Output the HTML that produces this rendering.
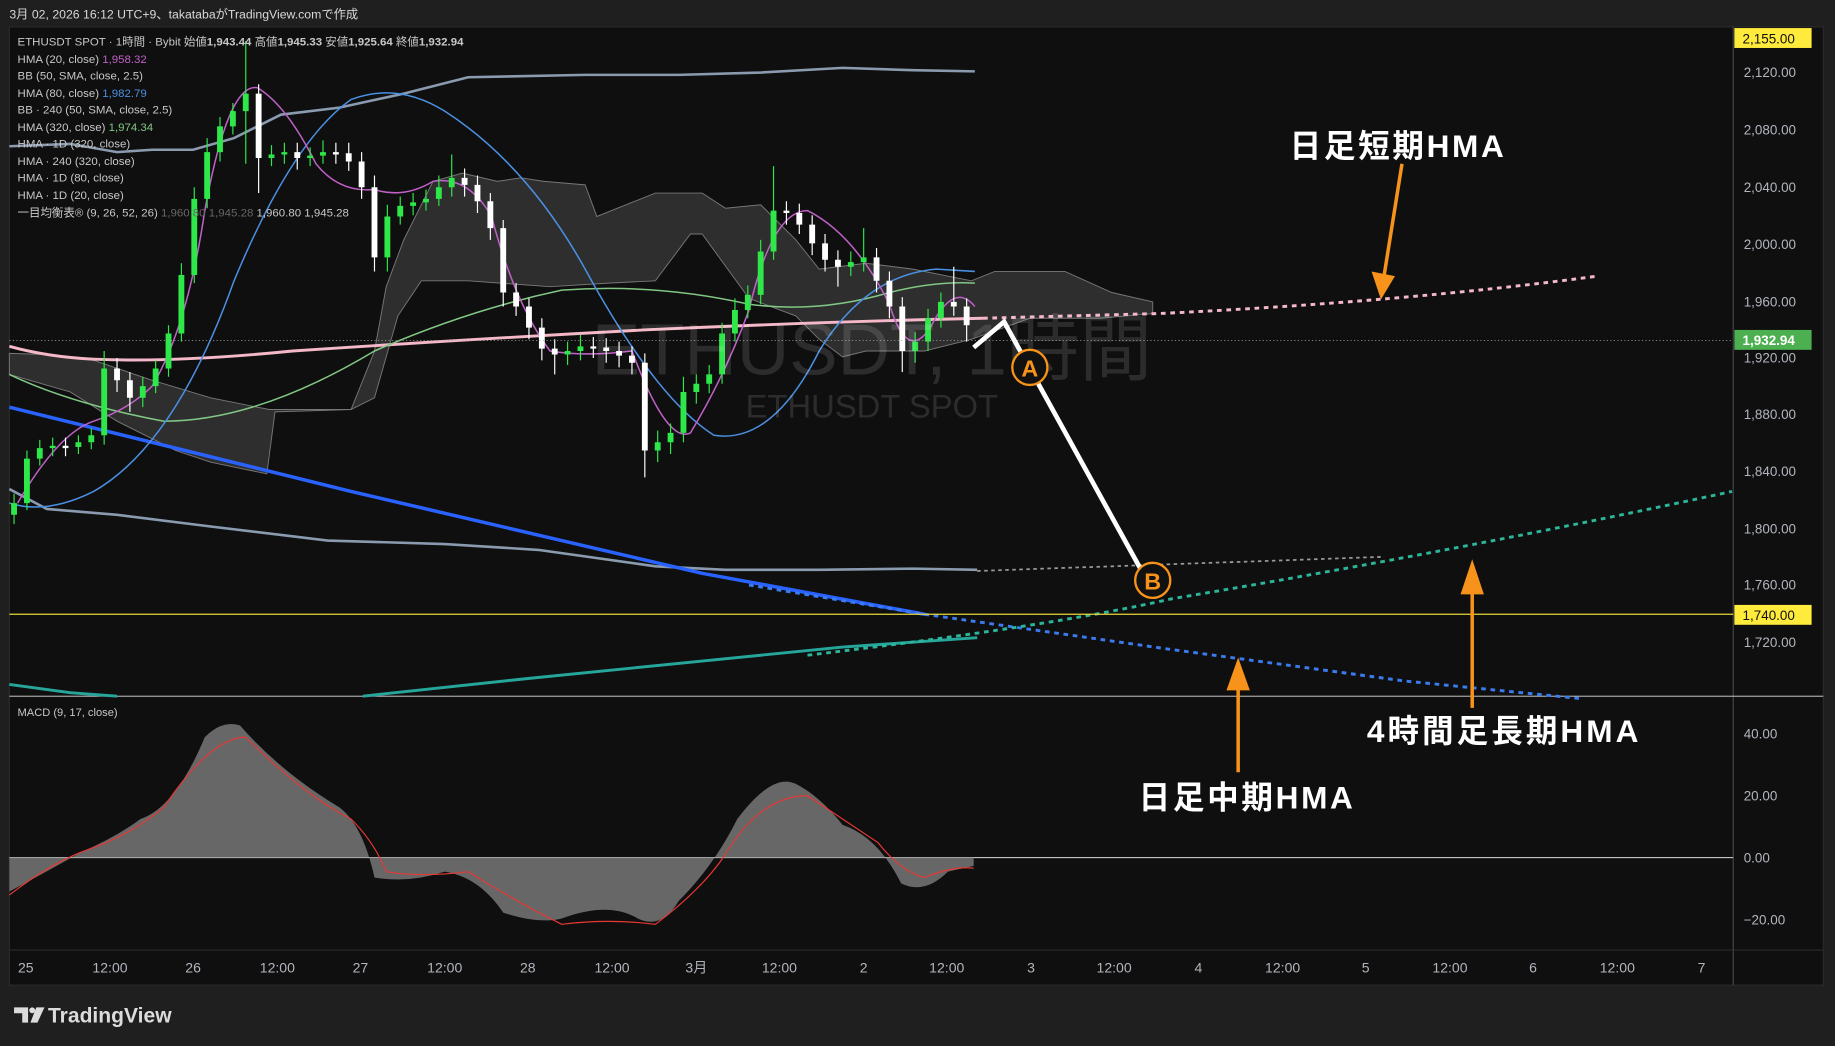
<!DOCTYPE html>
<html><head><meta charset="utf-8"><style>
html,body{margin:0;padding:0;background:#1f1f1f;width:1835px;height:1046px;overflow:hidden}
svg{display:block}
text{font-family:"Liberation Sans","Noto Sans CJK JP",sans-serif}
</style></head><body>
<svg width="1835" height="1046" viewBox="0 0 1568 894" preserveAspectRatio="none" xmlns="http://www.w3.org/2000/svg">
<rect width="1568" height="894" fill="#1f1f1f"/>
<text x="8" y="16" font-size="10.5" fill="#d8d8d8">3月 02, 2026 16:12 UTC+9、takatabaがTradingView.comで作成</text>
<rect x="8" y="23" width="1550" height="819" fill="#0f0f0f" stroke="#2a2a2a"/>
<line x1="1481" y1="23" x2="1481" y2="842" stroke="#555" stroke-width="0.8"/>
<line x1="8" y1="595" x2="1558" y2="595" stroke="#ddd" stroke-width="0.8"/>
<line x1="8" y1="812" x2="1558" y2="812" stroke="#333" stroke-width="0.8"/>
<path d="M8,302 L40,303 L80,308 L130,325 L180,340 L230,350 L300,350 L320,300 L330,245 L345,205 L370,155 L395,148 L425,155 L445,152 L465,155 L500,158 L510,185 L560,165 L600,165 L620,178 L650,175 L680,205 L700,230 L740,225 L780,230 L830,240 L850,232 L910,232 L950,250 L985,258 L985,268 L940,272 L880,272 L830,290 L790,300 L770,300 L740,300 L720,305 L700,290 L680,270 L640,255 L600,200 L590,200 L560,240 L520,242 L470,245 L400,240 L360,240 L340,270 L320,340 L300,350 L235,352 L228,405 L180,395 L150,385 L100,360 L60,335 L8,320 Z" fill="#3a3a3a" fill-opacity="0.75" stroke="#777" stroke-width="0.8"/>
<polyline points="8,125 60,123 100,130 130,128 165,128 200,118 240,98 290,92 345,80 400,66 500,64 580,64 650,62 720,58 780,60 833,61" fill="none" stroke="#8a9bb0" stroke-width="2.2"/>
<polyline points="8,418 40,435 100,440 180,450 280,462 380,465 460,470 560,484 620,487 700,487 780,486 835,487" fill="none" stroke="#8a9bb0" stroke-width="2.2"/>
<polyline points="835,488 1180,476" fill="none" stroke="#999" stroke-width="1.5" stroke-dasharray="3,3"/>
<polyline points="8,348 300,420 600,490 790,525" fill="none" stroke="#2962ff" stroke-width="3"/>
<polyline points="640,500 790,525 1000,555 1200,582 1350,597" fill="none" stroke="#3b7bf0" stroke-width="2.5" stroke-dasharray="4,4"/>
<polyline points="8,585 60,592 100,595" fill="none" stroke="#26a69a" stroke-width="2.5"/>
<polyline points="310,595 450,580 600,565 720,553 835,545" fill="none" stroke="#26a69a" stroke-width="2.5"/>
<path d="M690,560 Q900,535 1000,512 Q1250,470 1480,420" fill="none" stroke="#2bb59a" stroke-width="2.5" stroke-dasharray="4,4"/>
<path d="M8,296 Q40,305 80,307 Q150,310 250,300 Q400,290 550,282 Q700,275 840,272" fill="none" stroke="#f4b8c8" stroke-width="2.5"/>
<path d="M840,272 L990,268 Q1200,258 1365,236" fill="none" stroke="#f4b8c8" stroke-width="2.5" stroke-dasharray="4,4"/>
<path d="M8,320 Q60,345 140,360 Q220,360 320,300 Q400,265 480,248 Q560,242 640,260 Q700,268 760,250 Q800,240 833,242" fill="none" stroke="#81c784" stroke-width="1.3"/>
<path d="M8,430 Q40,440 80,420 Q150,380 200,240 Q250,120 300,85 Q340,70 380,95 Q450,140 500,230 Q560,340 610,372 Q660,380 700,300 Q740,235 800,230 L833,232" fill="none" stroke="#4a90e2" stroke-width="1.3"/>
<path d="M15,430 Q50,370 80,360 Q110,350 130,330 Q160,280 175,180 Q195,70 220,75 Q245,90 270,140 Q290,165 320,162 Q345,170 370,155 Q400,150 420,185 Q440,260 470,300 Q500,305 540,300 Q570,380 590,370 Q620,320 640,265 Q660,180 690,180 Q730,200 760,260 Q775,310 795,280 Q815,240 833,262" fill="none" stroke="#c060c8" stroke-width="1.3"/>
<!-- candles -->
<path stroke="#2ee84a" stroke-width="1" fill="none" d="M12,422V448 M23,385V436 M34,376V398 M45,374V390 M67,372V388 M78,366V384 M89,300V380 M122,322V348 M133,308V336 M144,278V322 M155,225V292 M166,160V242 M177,118V178 M188,100V138 M199,88V115 M210,35V140 M232,124V142 M243,122V140 M265,126V142 M276,120V140 M331,175V232 M342,168V192 M353,165V184 M364,162V180 M375,150V176 M386,132V168 M485,292V312 M496,286V308 M562,368V395 M573,362V388 M584,322V378 M595,320V345 M606,312V336 M617,276V328 M628,255V292 M639,244V272 M650,205V260 M661,142V222 M727,215V236 M738,195V232 M782,284V310 M793,264V300 M804,250V280"/>
<path stroke="#fff" stroke-width="1" fill="none" d="M56,374V390 M100,306V335 M111,318V352 M221,72V165 M254,122V145 M287,122V140 M298,122V146 M309,130V170 M320,150V232 M397,144V168 M408,150V182 M419,165V205 M430,188V262 M441,242V270 M452,255V290 M463,272V308 M474,290V320 M507,288V306 M518,289V310 M529,292V314 M540,296V320 M551,302V408 M672,172V192 M683,174V200 M694,184V218 M705,200V232 M716,214V245 M749,212V250 M760,232V272 M771,254V318 M815,228V270 M826,255V292"/>
<path fill="#2ee84a" d="M9.5,430h5v10h-5z M20.5,392h5v38h-5z M31.5,383h5v9h-5z M42.5,381h5v2h-5z M64.5,378h5v4h-5z M75.5,372h5v6h-5z M86.5,315h5v57h-5z M119.5,330h5v10h-5z M130.5,315h5v15h-5z M141.5,285h5v30h-5z M152.5,235h5v50h-5z M163.5,170h5v65h-5z M174.5,130h5v40h-5z M185.5,108h5v22h-5z M196.5,95h5v13h-5z M207.5,80h5v15h-5z M229.5,132h5v3h-5z M240.5,130h5v2h-5z M262.5,133h5v2h-5z M273.5,130h5v3h-5z M328.5,185h5v35h-5z M339.5,176h5v9h-5z M350.5,173h5v3h-5z M361.5,170h5v3h-5z M372.5,160h5v10h-5z M383.5,152h5v8h-5z M482.5,300h5v3h-5z M493.5,296h5v4h-5z M559.5,378h5v7h-5z M570.5,370h5v8h-5z M581.5,335h5v35h-5z M592.5,328h5v7h-5z M603.5,320h5v8h-5z M614.5,285h5v35h-5z M625.5,265h5v20h-5z M636.5,252h5v13h-5z M647.5,215h5v37h-5z M658.5,180h5v35h-5z M724.5,224h5v4h-5z M735.5,220h5v4h-5z M779.5,292h5v8h-5z M790.5,272h5v20h-5z M801.5,258h5v14h-5z"/>
<path fill="#fff" d="M53.5,381h5v2h-5z M97.5,315h5v10h-5z M108.5,325h5v15h-5z M218.5,80h5v55h-5z M251.5,130h5v5h-5z M284.5,130h5v2h-5z M295.5,131h5v7h-5z M306.5,138h5v22h-5z M317.5,160h5v60h-5z M394.5,152h5v6h-5z M405.5,158h5v14h-5z M416.5,172h5v23h-5z M427.5,195h5v55h-5z M438.5,250h5v12h-5z M449.5,262h5v18h-5z M460.5,280h5v18h-5z M471.5,298h5v5h-5z M504.5,296h5v2h-5z M515.5,297h5v3h-5z M526.5,300h5v4h-5z M537.5,304h5v6h-5z M548.5,310h5v75h-5z M669.5,180h5v2h-5z M680.5,182h5v10h-5z M691.5,192h5v16h-5z M702.5,208h5v14h-5z M713.5,222h5v6h-5z M746.5,220h5v20h-5z M757.5,240h5v22h-5z M768.5,262h5v38h-5z M812.5,258h5v4h-5z M823.5,262h5v16h-5z"/>
<line x1="8" y1="291" x2="1481" y2="291" stroke="#aaa" stroke-width="0.7" stroke-dasharray="1,2"/>
<line x1="8" y1="525" x2="1481" y2="525" stroke="#e8d93a" stroke-width="1"/>
<text x="745" y="320" font-size="62" fill="#fff" fill-opacity="0.12" text-anchor="middle">ETHUSDT, 1時間</text>
<text x="745" y="357" font-size="28" fill="#fff" fill-opacity="0.12" text-anchor="middle">ETHUSDT SPOT</text>
<polyline points="832,297 858,275 975,487" fill="none" stroke="#fff" stroke-width="4"/>
<circle cx="880" cy="314" r="15" fill="#111" stroke="#f7931a" stroke-width="2"/><text x="880" y="322" font-size="20" font-weight="bold" fill="#f7931a" text-anchor="middle">A</text>
<circle cx="985" cy="496" r="15" fill="#111" stroke="#f7931a" stroke-width="2"/><text x="985" y="504" font-size="20" font-weight="bold" fill="#f7931a" text-anchor="middle">B</text>
<g stroke="#f7931a" stroke-width="3" fill="#f7931a">
<line x1="1198" y1="140" x2="1182" y2="240"/><polygon points="1172,232 1180,256 1192,236" stroke="none"/>
<line x1="1058" y1="660" x2="1058" y2="578"/><polygon points="1048,590 1058,562 1068,590" stroke="none"/>
<line x1="1258" y1="605" x2="1258" y2="495"/><polygon points="1248,508 1258,478 1268,508" stroke="none"/>
</g>
<g font-size="27" font-weight="bold" fill="#fff">
<text x="1102" y="134" textLength="183">日足短期HMA</text>
<text x="1168" y="634" textLength="232">4時間足長期HMA</text>
<text x="973" y="691" textLength="183">日足中期HMA</text>
</g>
<g font-size="9.8" fill="#c8c8c8">
<text x="15" y="39">ETHUSDT SPOT · 1時間 · Bybit  始値<tspan font-weight="bold">1,943.44</tspan>  高値<tspan font-weight="bold">1,945.33</tspan>  安値<tspan font-weight="bold">1,925.64</tspan>  終値<tspan font-weight="bold">1,932.94</tspan></text>
<text x="15" y="54">HMA (20, close) <tspan fill="#c060c8">1,958.32</tspan></text>
<text x="15" y="68">BB (50, SMA, close, 2.5)</text>
<text x="15" y="83">HMA (80, close) <tspan fill="#4a90e2">1,982.79</tspan></text>
<text x="15" y="97">BB · 240 (50, SMA, close, 2.5)</text>
<text x="15" y="112">HMA (320, close) <tspan fill="#81c784">1,974.34</tspan></text>
<text x="15" y="126">HMA · 1D (320, close)</text>
<text x="15" y="141">HMA · 240 (320, close)</text>
<text x="15" y="155">HMA · 1D (80, close)</text>
<text x="15" y="170">HMA · 1D (20, close)</text>
<text x="15" y="185">一目均衡表® (9, 26, 52, 26) <tspan fill="#666">1,960.80  1,945.28</tspan>  1,960.80  1,945.28</text>
<text x="15" y="612" font-size="9.5">MACD (9, 17, close)</text>
</g>
<line x1="8" y1="733" x2="1481" y2="733" stroke="#ddd" stroke-width="0.8"/>
<path d="M8,733 L8,762 Q40,745 70,728 Q100,715 120,700 Q150,690 175,630 Q190,615 205,620 Q240,660 290,690 Q310,705 320,750 Q350,755 380,745 Q410,750 430,780 Q460,790 480,785 Q520,770 545,785 Q565,795 580,770 Q610,740 630,700 Q660,660 680,670 Q700,680 720,705 Q750,715 770,755 Q790,765 810,745 L832,740 L832,733 Z" fill="#777" fill-opacity="0.85"/>
<path d="M8,765 Q40,740 70,728 Q110,715 140,690 Q180,630 210,630 Q260,680 300,700 Q320,720 330,745 Q360,750 400,745 Q440,770 480,790 Q520,785 560,790 Q600,760 620,730 Q650,680 690,680 Q720,700 750,720 Q770,745 790,750 Q815,740 832,742" fill="none" stroke="#e53935" stroke-width="1"/>
<g font-size="11.5" fill="#b2b5be">
<text x="1490" y="66">2,120.00</text><text x="1490" y="115">2,080.00</text><text x="1490" y="164">2,040.00</text><text x="1490" y="213">2,000.00</text><text x="1490" y="262">1,960.00</text><text x="1490" y="310">1,920.00</text><text x="1490" y="358">1,880.00</text><text x="1490" y="407">1,840.00</text><text x="1490" y="456">1,800.00</text><text x="1490" y="504">1,760.00</text><text x="1490" y="553">1,720.00</text>
<text x="1490" y="631">40.00</text><text x="1490" y="684">20.00</text><text x="1490" y="737">0.00</text><text x="1490" y="790">−20.00</text>
</g>
<rect x="1482" y="24" width="66" height="17" fill="#ffeb3b"/><text x="1489" y="37" font-size="11.5" fill="#111">2,155.00</text>
<rect x="1482" y="282" width="66" height="17" fill="#4caf50"/><text x="1489" y="295" font-size="11.5" font-weight="bold" fill="#fff">1,932.94</text>
<rect x="1482" y="517" width="66" height="17" fill="#ffeb3b"/><text x="1489" y="530" font-size="11.5" fill="#111">1,740.00</text>
<g font-size="12" fill="#b2b5be" text-anchor="middle">
<text x="22" y="831">25</text><text x="94" y="831">12:00</text><text x="165" y="831">26</text><text x="237" y="831">12:00</text><text x="308" y="831">27</text><text x="380" y="831">12:00</text><text x="451" y="831">28</text><text x="523" y="831">12:00</text><text x="595" y="831">3月</text><text x="666" y="831">12:00</text><text x="738" y="831">2</text><text x="809" y="831">12:00</text><text x="881" y="831">3</text><text x="952" y="831">12:00</text><text x="1024" y="831">4</text><text x="1096" y="831">12:00</text><text x="1167" y="831">5</text><text x="1239" y="831">12:00</text><text x="1310" y="831">6</text><text x="1382" y="831">12:00</text><text x="1454" y="831">7</text>
</g>
<g fill="#dcdcdc">
<path d="M12,861 h12 v13 h-5 v-8 h-7z"/><circle cx="27.5" cy="863.5" r="2.5"/><path d="M31,861 h7 l-6,13 h-6z"/>
<text x="41" y="874" font-size="18" font-weight="bold">TradingView</text>
</g>
</svg>
</body></html>
